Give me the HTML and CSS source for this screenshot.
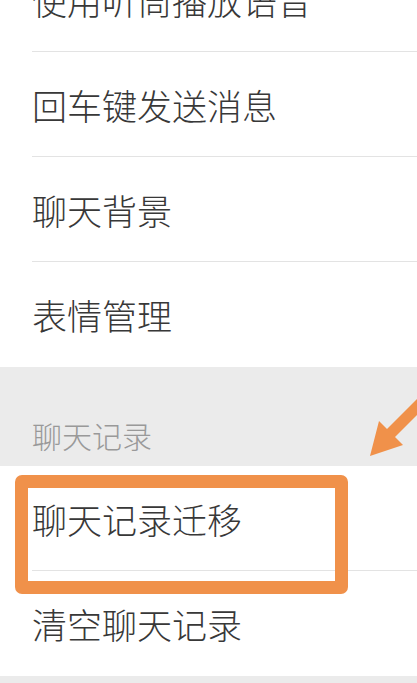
FILE: index.html
```html
<!DOCTYPE html>
<html lang="zh-CN">
<head>
    <meta charset="UTF-8">
    <title>聊天设置</title>
    <link rel="stylesheet" href="styles.css">
</head>
<body>

    <div class="page">
        <div class="group">
            <div class="item"><div class="label">使用听筒播放语音</div></div>
            <div class="item"><div class="label">回车键发送消息</div></div>
            <div class="item"><div class="label">聊天背景</div></div>
            <div class="item last"><div class="label">表情管理</div></div>
        </div>

        <div class="group-title">聊天记录</div>

        <div class="group">
            <div class="item"><div class="label">聊天记录迁移</div></div>
            <div class="item last"><div class="label">清空聊天记录</div></div>
        </div>
        <div class="footer"></div>
    </div>

    <!-- annotation -->
    <div class="mark"></div>
    <svg class="arrow" width="417" height="683" viewBox="0 0 417 683">
        <polygon points="370,456 379,421 387,429 425,391 433,399 395,437 403,445" fill="#f0914a"/>
    </svg>

</body>
</html>
```

FILE: styles.css
```css
body {
    margin: 0;
    background: #ebebeb;
    font-family: "Noto Sans CJK SC", "Noto Sans", sans-serif;
    overflow: hidden;
}
.page {
    margin-top: -53px;
}
.group {
    background: #fff;
}
.item {
    padding-left: 32px;
}
.label {
    height: 104px;
    line-height: 106px;
    font-size: 35px;
    font-weight: 300;
    color: #383838;
    border-bottom: 1px solid #e3e3e3;
}
.item.last .label {
    border-bottom: none;
    height: 105px;
}
.group-title {
    height: 99px;
    box-sizing: border-box;
    padding: 48px 0 0 32px;
    font-size: 30px;
    font-weight: 300;
    line-height: 40px;
    color: #999;
}
.footer {
    height: 10px;
}
.mark {
    position: absolute;
    left: 15px;
    top: 475px;
    width: 307px;
    height: 93px;
    border: 13px solid #f0914a;
    border-radius: 7px;
}
.arrow {
    position: absolute;
    left: 0;
    top: 0;
}
```
